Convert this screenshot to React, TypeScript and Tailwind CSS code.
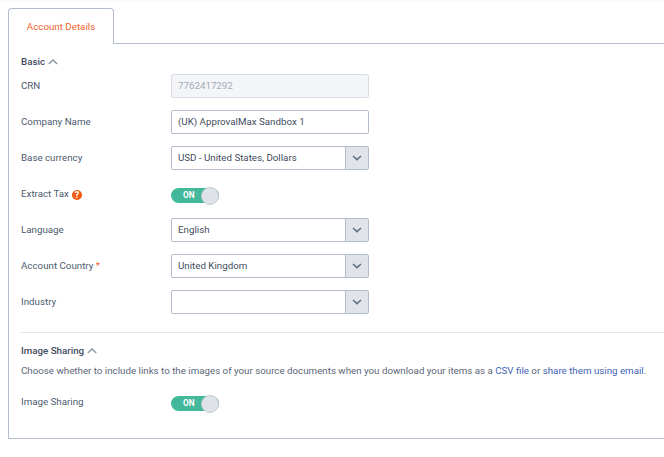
import React from "react";

const labelCls = "w-[150px] shrink-0 text-[9.75px] leading-[14px] text-[#4d5a6e]";
const border = "border-[#b3bccb]";

function Chevron({ className }: { className?: string }) {
  return (
    <svg width="10" height="6" viewBox="0 0 10 6" fill="none" className={className}>
      <path d="M1 1l4 3.6L9 1" stroke="#5f7088" strokeWidth="1.6" />
    </svg>
  );
}

function ChevronUp() {
  return (
    <svg width="10" height="6" viewBox="0 0 10 6" fill="none" className="ml-[3px]">
      <path d="M.8 5L5 1l4.2 4" stroke="#8a96a6" strokeWidth="1.4" />
    </svg>
  );
}

function Row({ label, children }: { label: React.ReactNode; children: React.ReactNode }) {
  return (
    <div className="flex items-center h-[24px] mb-[12px]">
      <div className={labelCls}>{label}</div>
      {children}
    </div>
  );
}

function Select({ value }: { value?: string }) {
  return (
    <div className={`flex w-[198px] h-[24px] border ${border} rounded-[2px] bg-white`}>
      <div className="flex-1 pl-[6px] text-[9.75px] leading-[22px] text-[#3f4b5e]">{value}</div>
      <div className={`w-[23px] flex items-center justify-center border-l ${border} bg-[#e0e4ea]`}>
        <Chevron />
      </div>
    </div>
  );
}

function Toggle({ className }: { className: string }) {
  return (
    <div className={`relative self-start w-[48px] h-[15px] rounded-full bg-[#43b89a] text-white text-[8.25px] font-bold leading-[15px] pl-[12px] ${className}`}>
      ON
      <div className="absolute right-0 top-[-1.5px] w-[18px] h-[18px] rounded-full bg-[#dfe3e9] border border-[#c3ccd6]" />
    </div>
  );
}

export default function App() {
  return (
    <div
      className="w-[664px] h-[457px] overflow-hidden bg-white"
      style={{ fontFamily: "Roboto, sans-serif" }}
    >
      <div className="h-[2px] bg-[#fafafa]" />
      <div className="pl-[8px] pt-[6px]">
        <div className="flex h-[36px]">
          <div className={`w-[106px] border border-b-0 ${border} rounded-t-[4px] text-[9.75px] leading-[36px] text-center text-[#f2642a]`}>
            Account Details
          </div>
          <div className={`flex-1 border-b ${border}`} />
        </div>
        <div className={`h-[395px] border-l border-b ${border} pl-[12px] pt-[11px]`}>
          <div className="flex items-center h-[14px] mb-[5px] text-[9.75px] font-medium text-[#3f4b5e]">
            Basic
            <ChevronUp />
          </div>
          <Row label="CRN">
            <div className="w-[198px] h-[24px] border border-[#d9dee6] rounded-[2px] bg-[#f3f5f8] pl-[6px] text-[9.75px] leading-[22px] text-[#a3acb9]">
              7762417292
            </div>
          </Row>
          <Row label="Company Name">
            <div className={`w-[198px] h-[24px] border ${border} rounded-[2px] pl-[6px] text-[9.75px] leading-[22px] text-[#3f4b5e]`}>
              (UK) ApprovalMax Sandbox 1
            </div>
          </Row>
          <Row label="Base currency">
            <Select value="USD - United States, Dollars" />
          </Row>
          <Row
            label={
              <span className="flex items-center">
                Extract Tax
                <span className="relative top-[1px] ml-[3px] w-[10px] h-[10px] rounded-full bg-[#f2590f] text-white text-[9px] font-bold leading-[10px] text-center">
                  ?
                </span>
              </span>
            }
          >
            <Toggle className="mt-[6px]" />
          </Row>
          <Row label="Language">
            <Select value="English" />
          </Row>
          <Row
            label={
              <span>
                Account Country <span className="text-[#f2642a]">*</span>
              </span>
            }
          >
            <Select value="United Kingdom" />
          </Row>
          <Row label="Industry">
            <Select />
          </Row>
          <div className="h-px bg-[#e3e5e9] mt-[18px]" />
          <div className="flex items-center h-[14px] mt-[11px] text-[9.75px] font-medium text-[#3f4b5e]">
            Image Sharing
            <ChevronUp />
          </div>
          <div className="mt-[6px] h-[14px] text-[9.75px] leading-[14px] whitespace-nowrap text-[#5b6677]">
            Choose whether to include links to the images of your source documents when you download your items as a{" "}
            <span className="text-[#3f63b5]">CSV file</span> or{" "}
            <span className="text-[#3f63b5]">share them using email.</span>
          </div>
          <div className="mt-[14px]">
            <Row label={<span className="relative -top-[2px]">Image Sharing</span>}>
              <Toggle className="mt-[4px]" />
            </Row>
          </div>
        </div>
      </div>
    </div>
  );
}
